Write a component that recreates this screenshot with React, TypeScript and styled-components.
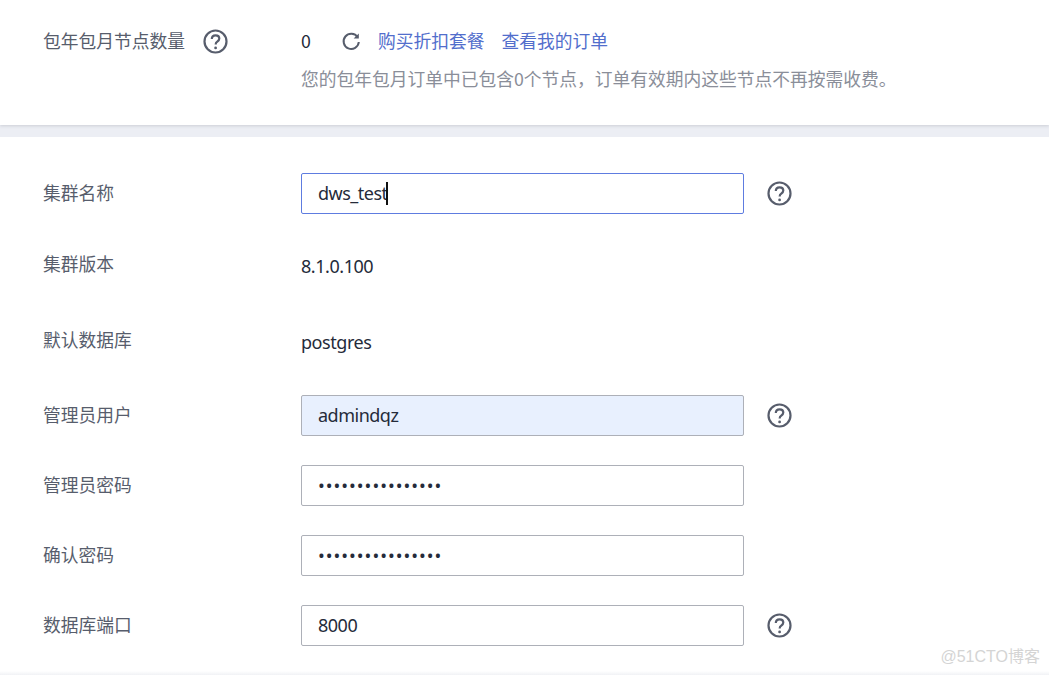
import React from 'react';
import styled, { createGlobalStyle } from 'styled-components';

const GlobalStyle = createGlobalStyle`
  html, body {
    margin: 0;
    height: 100%;
    background: #fff;
    overflow: hidden;
  }
  body {
    font-family: "Noto Sans CJK SC", "Noto Sans", sans-serif;
  }
`;

const Page = styled.div`
  position: relative;
  width: 1049px;
  height: 675px;
  overflow: hidden;
  background: #fff;
`;

const TopPanel = styled.section`
  display: grid;
  grid-template-columns: 258px 1fr;
  height: 125px;
  padding: 26px 0 0 43px;
  box-sizing: border-box;
  box-shadow: 0 1px 3px rgba(60, 64, 80, 0.18);
  position: relative;
`;

const Band = styled.div`
  height: 12px;
  background: #eceef4;
`;

const FormPanel = styled.section`
  display: flex;
  flex-direction: column;
  padding: 36px 0 0 43px;
`;

const Row = styled.div<{ $height: number; $gap?: number }>`
  display: grid;
  grid-template-columns: 258px 443px auto;
  align-items: center;
  height: ${(p) => p.$height}px;
  margin-top: ${(p) => p.$gap ?? 0}px;
`;

const Label = styled.div`
  display: flex;
  align-items: center;
  height: 30px;
  font-size: 17.75px;
  line-height: 30px;
  color: #575d6c;
`;

const LabelText = styled.span<{ $lift: number }>`
  margin-top: ${(p) => -p.$lift * 2}px;
`;

const LabelOffset = styled(Label)`
  margin-top: -5px;
`;

const Help = styled.svg`
  width: 25px;
  height: 25px;
  display: block;
  flex: none;
`;

const LabelHelp = styled.span`
  margin-left: 18px;
`;

const RowHelp = styled.span`
  margin-left: 23px;
`;

const ValueText = styled.div`
  margin-top: -2px;
  font: 18px "Noto Sans", "Noto Sans CJK SC", sans-serif;
  letter-spacing: -0.45px;
  color: #252b3a;
`;

const CountLine = styled.div`
  display: flex;
  align-items: center;
  height: 30px;
  font-size: 17.75px;
  color: #252b3a;
`;

const Count = styled.span`
  width: 40px;
  margin-top: -2px;
`;

const Refresh = styled.svg`
  width: 20px;
  height: 20px;
  margin-right: 17px;
`;

const Link = styled.a`
  margin-top: -2px;
  margin-right: 17px;
  color: #526ecc;
  cursor: pointer;
`;

const Hint = styled.div`
  margin-top: 7px;
  font-size: 17.75px;
  line-height: 30px;
  color: #8a8e99;
`;

const Field = styled.div`
  position: relative;
`;

const Input = styled.input<{ $state?: 'focus' | 'filled' }>`
  display: block;
  box-sizing: border-box;
  width: 443px;
  height: 41px;
  padding: 0 16px 2px;
  font: 18px "Noto Sans", "Noto Sans CJK SC", sans-serif;
  letter-spacing: -0.5px;
  color: #252b3a;
  border-radius: 2px;
  outline: none;
  border: 1px solid ${(p) => (p.$state === 'focus' ? '#5e7ce0' : '#adb0b8')};
  background: ${(p) => (p.$state === 'filled' ? '#e8f0fe' : '#fff')};

  &[type='password'] {
    letter-spacing: 1px;
  }
`;

const Caret = styled.span`
  position: absolute;
  left: 85px;
  top: 9px;
  width: 2px;
  height: 23px;
  background: #111;
`;

const Footer = styled.div`
  position: absolute;
  left: 0;
  right: 0;
  bottom: 0;
  height: 4px;
  background: linear-gradient(#fff, #f1f2f5);
`;

const Watermark = styled.div`
  position: absolute;
  right: 9px;
  bottom: 8px;
  font: 16px "Liberation Sans", "Noto Sans CJK SC", sans-serif;
  color: #d4d4d4;
`;

const HelpIcon = () => (
  <Help viewBox="0 0 25 25" fill="none">
    <circle cx="12.5" cy="12.5" r="11" stroke="#575d6c" strokeWidth="2.2" />
    <path
      d="M8.8 9.9c0-2.2 1.6-3.6 3.8-3.6 2.2 0 3.7 1.3 3.7 3.2 0 1.6-.9 2.3-2 3.1-1 .7-1.6 1.3-1.6 2.6v.4"
      stroke="#575d6c"
      strokeWidth="2.2"
    />
    <circle cx="12.6" cy="18.9" r="1.4" fill="#575d6c" />
  </Help>
);

const hintText = '您的包年包月订单中已包含0个节点\uFF0C订单有效期内这些节点不再按需收费。';

const fields = [
  { label: '管理员用户', type: 'text', value: 'admindqz', state: 'filled' as const, help: true },
  { label: '管理员密码', type: 'password', value: 'abcdefghijklmnop', help: false },
  { label: '确认密码', type: 'password', value: 'abcdefghijklmnop', help: false },
  { label: '数据库端口', type: 'text', value: '8000', help: true },
];

export default function App() {
  return (
    <Page>
      <GlobalStyle />
      <TopPanel>
        <Label>
          <LabelText $lift={1}>包年包月节点数量</LabelText>
          <LabelHelp>
            <HelpIcon />
          </LabelHelp>
        </Label>
        <div>
          <CountLine>
            <Count>0</Count>
            <Refresh viewBox="0 0 20 20" fill="none">
              <path d="M16.6 6.2A7.6 7.6 0 1 0 17.8 11" stroke="#575d6c" strokeWidth="2" />
              <path d="M17.8 2.4v5.2h-5.2z" fill="#575d6c" />
            </Refresh>
            <Link>购买折扣套餐</Link>
            <Link>查看我的订单</Link>
          </CountLine>
          <Hint>{hintText}</Hint>
        </div>
      </TopPanel>
      <Band />
      <FormPanel>
        <Row $height={41}>
          <Label>
            <LabelText $lift={2}>集群名称</LabelText>
          </Label>
          <Field>
            <Input $state="focus" defaultValue="dws_test" readOnly />
            <Caret />
          </Field>
          <RowHelp>
            <HelpIcon />
          </RowHelp>
        </Row>
        <Row $height={106}>
          <LabelOffset>
            <LabelText $lift={2}>集群版本</LabelText>
          </LabelOffset>
          <ValueText>8.1.0.100</ValueText>
        </Row>
        <Row $height={46}>
          <LabelOffset>
            <LabelText $lift={2}>默认数据库</LabelText>
          </LabelOffset>
          <ValueText>postgres</ValueText>
        </Row>
        {fields.map((f) => (
          <Row key={f.label} $height={41} $gap={29}>
            <Label>
              <LabelText $lift={2}>{f.label}</LabelText>
            </Label>
            <Field>
              <Input type={f.type} $state={f.state} defaultValue={f.value} readOnly />
            </Field>
            {f.help && (
              <RowHelp>
                <HelpIcon />
              </RowHelp>
            )}
          </Row>
        ))}
      </FormPanel>
      <Footer />
      <Watermark>@51CTO博客</Watermark>
    </Page>
  );
}
